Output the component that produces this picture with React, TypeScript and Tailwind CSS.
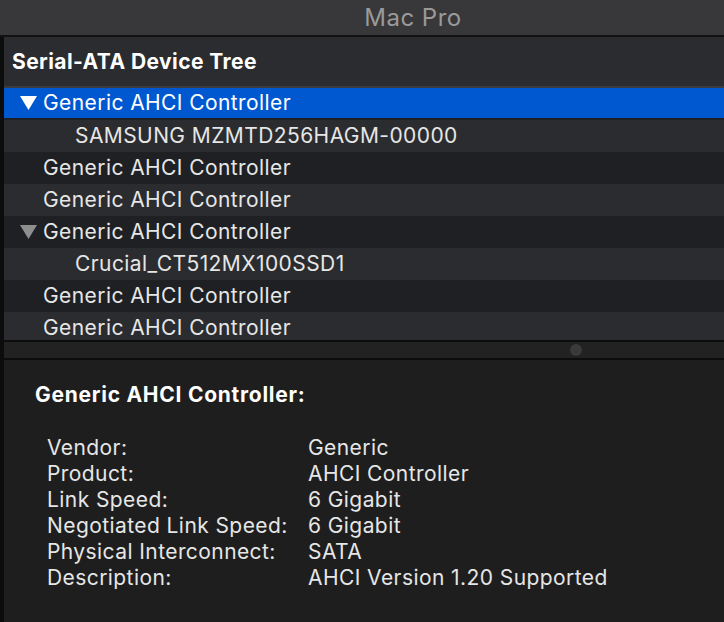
import React from 'react';

type Row = { label: string; level: 0 | 1; expanded?: boolean; selected?: boolean };

const rows: Row[] = [
  { label: 'Generic AHCI Controller', level: 0, expanded: true, selected: true },
  { label: 'SAMSUNG MZMTD256HAGM-00000', level: 1 },
  { label: 'Generic AHCI Controller', level: 0 },
  { label: 'Generic AHCI Controller', level: 0 },
  { label: 'Generic AHCI Controller', level: 0, expanded: true },
  { label: 'Crucial_CT512MX100SSD1', level: 1 },
  { label: 'Generic AHCI Controller', level: 0 },
  { label: 'Generic AHCI Controller', level: 0 },
];

const details: [string, string][] = [
  ['Vendor:', 'Generic'],
  ['Product:', 'AHCI Controller'],
  ['Link Speed:', '6 Gigabit'],
  ['Negotiated Link Speed:', '6 Gigabit'],
  ['Physical Interconnect:', 'SATA'],
  ['Description:', 'AHCI Version 1.20 Supported'],
];

const Triangle = ({ color }: { color: string }) => (
  <svg width="17" height="14" viewBox="0 0 17 14" className="shrink-0">
    <polygon points="0,0 17,0 8.5,14" fill={color} />
  </svg>
);

const App: React.FC = () => {
  return (
    <div
      className="w-[724px] h-[622px] overflow-hidden flex flex-col bg-[#1e1e1e] text-[#e6e6e6]"
      style={{ fontFamily: 'Inter, "Liberation Sans", Arial, sans-serif' }}
    >
      {/* title bar */}
      <div className="h-[37px] shrink-0 flex items-center justify-center pl-[102px] bg-[#38383a] border-b-2 border-[#111]">
        <span className="text-[24px] tracking-[0.02em] text-[#9a9a9a]">Mac Pro</span>
      </div>

      <div className="flex-1 flex border-l-[4px] border-[#0c0c0c]">
        <div className="flex-1 flex flex-col">
          {/* tree */}
          <div className="h-[51px] shrink-0 flex items-center pl-[8px] bg-[#2b2c2f] border-b-2 border-[#3c3c3e]">
            <span className="text-[21px] tracking-[0.02em] font-bold text-white">Serial-ATA Device Tree</span>
          </div>
          <div className="h-[252px] shrink-0 overflow-hidden flex flex-col">
            {rows.map((r, i) => (
              <div
                key={i}
                className={`h-[32px] shrink-0 flex items-center text-[21px] tracking-[0.02em] ${
                  r.selected
                    ? 'bg-[#0058d0] text-white border-b-2 border-[#1f2023]'
                    : i % 2 === 1
                    ? 'bg-[#2b2c2f]'
                    : 'bg-[#1f2023]'
                } ${r.level === 1 ? 'pl-[71px]' : 'pl-[16px]'}`}
              >
                {r.level === 0 && (
                  <span className="w-[23px] flex items-center">
                    {r.expanded && <Triangle color={r.selected ? '#ffffff' : '#8e8e8e'} />}
                  </span>
                )}
                <span className="whitespace-nowrap">{r.label}</span>
              </div>
            ))}
          </div>

          {/* splitter */}
          <div className="h-[20px] shrink-0 flex items-center justify-center pl-[424px] bg-[#222222] border-y-2 border-[#0c0c0c]">
            <span className="w-[12px] h-[12px] rounded-full bg-[#3a3a3a]" />
          </div>

          {/* details */}
          <div className="flex-1 bg-[#1e1e1e] pt-[22px] pl-[31px]">
            <div className="text-[21px] tracking-[0.035em] font-bold text-white leading-[26px]">Generic AHCI Controller:</div>
            <div className="mt-[27px] pl-[12px] flex flex-col">
              {details.map(([k, v]) => (
                <div key={k} className="flex text-[21px] tracking-[0.02em] leading-[26px]">
                  <span className="w-[261px] shrink-0">{k}</span>
                  <span>{v}</span>
                </div>
              ))}
            </div>
          </div>
        </div>
      </div>
    </div>
  );
};

export default App;
